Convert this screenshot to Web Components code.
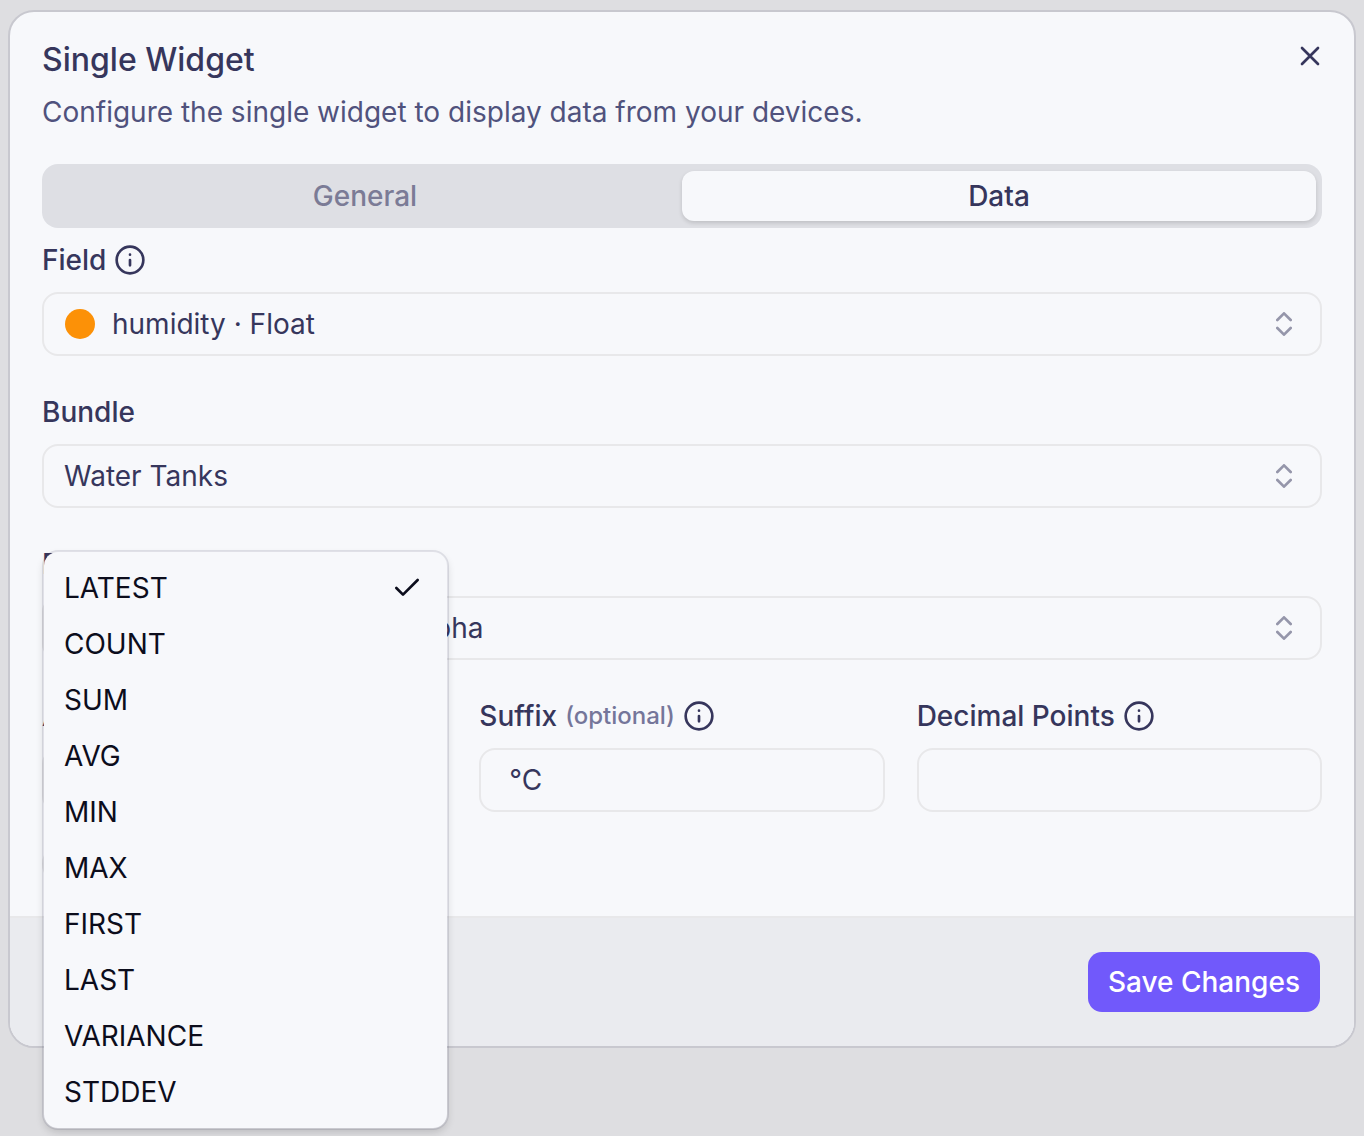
<!DOCTYPE html>
<html lang="en">
<head>
<meta charset="utf-8">
<meta name="viewport" content="width=device-width, initial-scale=1">
<title>Single Widget</title>
<style>
	body {
		--card: #f7f8fb;
		--text: #36365c;
		--muted: #50527d;
		--line: #e8e8ea;
		--primary: #7159fb;
		box-sizing: border-box;
		min-height: 100vh;
		margin: 0;
		padding: 10px 8px;
		background: #dedee1;
		color: var(--text);
		font: 28px/32px Inter, "Liberation Sans", sans-serif;
	}

	.row {
		display: grid;
		grid-template-columns: repeat(3, 1fr);
		gap: 32px;
	}

	.fields {
		display: grid;
		gap: 40px;
	}
</style>
</head>
<body>
	<widget-dialog heading="Single Widget" description="Configure the single widget to display data from your devices.">
		<tab-bar tabs="General,Data" active="Data"></tab-bar>
		<div class="fields">
			<select-field label="Field" info options="humidity · Float">
				<svg slot="prefix" width="32" height="32" viewBox="0 0 32 32" aria-hidden="true"><circle cx="16" cy="16" r="15" fill="#fc9107"/></svg>
			</select-field>
			<select-field label="Bundle" options="Water Tanks"></select-field>
			<select-field label="Device" options="Water Tank Sensor Probe Alpha"></select-field>
			<div class="row">
				<select-field label="Aggregation" options="LATEST,COUNT,SUM,AVG,MIN,MAX,FIRST,LAST,VARIANCE,STDDEV">
					<option-menu slot="menu" selected="LATEST" options="LATEST,COUNT,SUM,AVG,MIN,MAX,FIRST,LAST,VARIANCE,STDDEV"></option-menu>
				</select-field>
				<text-field label="Suffix" note="(optional)" value="°C"></text-field>
				<text-field label="Decimal Points" value=""></text-field>
			</div>
		</div>
		<toggle-switch></toggle-switch>
		<action-button slot="footer">Save Changes</action-button>
	</widget-dialog>

<script>
const icon = (paths) =>
	`<svg class="icon" width="32" height="32" viewBox="0 0 24 24" fill="none" stroke="currentColor" stroke-width="2" stroke-linecap="round" stroke-linejoin="round" aria-hidden="true">${paths}</svg>`;

const icons = {
	close: icon('<path d="M18 6 6 18M6 6l12 12"/>'),
	info: icon('<circle cx="12" cy="12" r="10"/><path d="M12 16v-4M12 8h.01"/>'),
	chevrons: icon('<path d="m7 15 5 5 5-5M7 9l5-5 5 5"/>'),
	check: icon('<path d="M20 6 9 17l-5-5"/>'),
};

const fieldStyles = `
	:host {
		display: block;
		position: relative;
		min-width: 0;
	}
	.label {
		display: flex;
		align-items: center;
		gap: 8px;
		margin-bottom: 16px;
		font-weight: 500;
		white-space: nowrap;
	}
	.note {
		font-size: 24px;
		color: #75769a;
	}
	.box {
		display: flex;
		align-items: center;
		box-sizing: border-box;
		height: 64px;
		border: 2px solid var(--line);
		border-radius: 16px;
	}
	.icon {
		display: block;
		flex: none;
	}
	select, input {
		flex: 1;
		min-width: 0;
		height: 100%;
		margin: 0;
		padding: 0;
		border: 0;
		outline: 0;
		background: none;
		color: inherit;
		font: inherit;
		appearance: none;
	}
`;

class WidgetDialog extends HTMLElement {
	constructor() {
		super();
		this.attachShadow({ mode: "open" });
	}

	connectedCallback() {
		this.shadowRoot.innerHTML = `
			<style>
				:host {
					display: block;
					position: relative;
					border: 2px solid #c8c8cf;
					border-radius: 26px;
					background: var(--card);
				}
				header {
					padding: 32px 32px 0;
				}
				h1 {
					margin: 0 0 16px;
					font-size: 32px;
					font-weight: 500;
					line-height: 32px;
				}
				p {
					margin: 0;
					line-height: 40px;
					color: var(--muted);
				}
				.close {
					position: absolute;
					top: 28px;
					right: 28px;
					padding: 0;
					border: 0;
					background: none;
					color: inherit;
				}
				.icon {
					display: block;
				}
				.body {
					display: grid;
					gap: 16px;
					padding: 32px;
				}
				footer {
					display: flex;
					justify-content: flex-end;
					padding: 34px;
					border-top: 2px solid #e8e8ea;
					border-radius: 0 0 24px 24px;
					background: #eaebef;
				}
			</style>
			<header>
				<h1>${this.getAttribute("heading")}</h1>
				<p>${this.getAttribute("description")}</p>
			</header>
			<div class="body"><slot></slot></div>
			<footer><slot name="footer"></slot></footer>
			<button class="close" type="button" aria-label="Close">${icons.close}</button>
		`;
	}
}

class TabBar extends HTMLElement {
	constructor() {
		super();
		this.attachShadow({ mode: "open" });
		this.shadowRoot.addEventListener("click", (e) => {
			const tab = e.target.closest("button");
			if (tab) {
				this.setAttribute("active", tab.textContent);
				this.render();
			}
		});
	}

	connectedCallback() {
		this.render();
	}

	render() {
		const active = this.getAttribute("active");
		const tabs = this.getAttribute("tabs").split(",");
		this.shadowRoot.innerHTML = `
			<style>
				:host {
					display: block;
				}
				.tabs {
					display: grid;
					grid-auto-flow: column;
					grid-auto-columns: 1fr;
					padding: 7px 6px;
					border-radius: 16px;
					background: #dedfe4;
				}
				button {
					height: 50px;
					padding: 0;
					border: 0;
					border-radius: 12px;
					background: none;
					color: #7b7b96;
					font: inherit;
					font-weight: 500;
				}
				button[aria-selected="true"] {
					background: var(--card);
					color: var(--text);
					box-shadow: 0 2px 4px rgba(0, 0, 0, 0.14);
				}
			</style>
			<div class="tabs" role="tablist">
				${tabs.map((t) => `<button type="button" role="tab" aria-selected="${t === active}">${t}</button>`).join("")}
			</div>
		`;
	}
}

class SelectField extends HTMLElement {
	constructor() {
		super();
		this.attachShadow({ mode: "open" });
	}

	connectedCallback() {
		const options = this.getAttribute("options").split(",");
		this.shadowRoot.innerHTML = `
			<style>
				${fieldStyles}
				.box {
					padding: 0 20px;
				}
				.box > .icon {
					opacity: 0.5;
				}
				::slotted([slot="prefix"]) {
					flex: none;
					margin-right: 16px;
				}
			</style>
			<div class="label">
				<label for="control">${this.getAttribute("label")}</label>
				${this.hasAttribute("info") ? icons.info : ""}
			</div>
			<div class="box">
				<slot name="prefix"></slot>
				<select id="control">${options.map((o) => `<option>${o}</option>`).join("")}</select>
				${icons.chevrons}
			</div>
			<slot name="menu"></slot>
		`;
	}
}

class TextField extends HTMLElement {
	constructor() {
		super();
		this.attachShadow({ mode: "open" });
	}

	connectedCallback() {
		const note = this.getAttribute("note");
		this.shadowRoot.innerHTML = `
			<style>
				${fieldStyles}
				.box {
					padding: 0 28px;
				}
			</style>
			<div class="label">
				<label for="control">${this.getAttribute("label")}</label>
				${note ? `<span class="note">${note}</span>` : ""}
				${icons.info}
			</div>
			<div class="box"><input id="control" type="text" value="${this.getAttribute("value")}"></div>
		`;
	}
}

class OptionMenu extends HTMLElement {
	constructor() {
		super();
		this.attachShadow({ mode: "open" });
	}

	connectedCallback() {
		const selected = this.getAttribute("selected");
		const options = this.getAttribute("options").split(",");
		this.shadowRoot.innerHTML = `
			<style>
				:host {
					position: absolute;
					z-index: 1;
					top: -150px;
					left: 0;
					right: -2px;
					padding: 8px;
					border: 2px solid rgba(54, 54, 92, 0.12);
					border-radius: 16px;
					background: var(--card);
					background-clip: padding-box;
					box-shadow: 0 4px 8px -2px rgba(0, 0, 0, 0.16);
					color: #0c0d1c;
				}
				button {
					display: flex;
					align-items: center;
					justify-content: space-between;
					width: 100%;
					height: 56px;
					padding: 0 16px 0 12px;
					border: 0;
					background: none;
					color: inherit;
					font: inherit;
				}
			</style>
			<div role="listbox" aria-label="Aggregation">
				${options.map((o) => `<button type="button" role="option" aria-selected="${o === selected}"><span>${o}</span>${o === selected ? icons.check : ""}</button>`).join("")}
			</div>
		`;
	}
}

class ToggleSwitch extends HTMLElement {
	constructor() {
		super();
		this.attachShadow({ mode: "open" });
		this.shadowRoot.innerHTML = `
			<style>
				:host {
					display: block;
					margin-top: 16px;
				}
				input {
					display: block;
					box-sizing: border-box;
					width: 72px;
					height: 40px;
					margin: 0;
					border: 2px solid var(--line);
					border-radius: 20px;
					appearance: none;
				}
			</style>
			<input type="checkbox" role="switch" aria-label="Enabled">
		`;
	}
}

class ActionButton extends HTMLElement {
	constructor() {
		super();
		this.attachShadow({ mode: "open" });
		this.shadowRoot.innerHTML = `
			<style>
				:host {
					display: block;
				}
				button {
					height: 60px;
					padding: 0 20px;
					border: 0;
					border-radius: 14px;
					background: var(--primary);
					color: #fff;
					font: inherit;
					font-weight: 500;
				}
			</style>
			<button type="button"><slot></slot></button>
		`;
	}
}

customElements.define("widget-dialog", WidgetDialog);
customElements.define("tab-bar", TabBar);
customElements.define("select-field", SelectField);
customElements.define("text-field", TextField);
customElements.define("option-menu", OptionMenu);
customElements.define("toggle-switch", ToggleSwitch);
customElements.define("action-button", ActionButton);
</script>
</body>
</html>
